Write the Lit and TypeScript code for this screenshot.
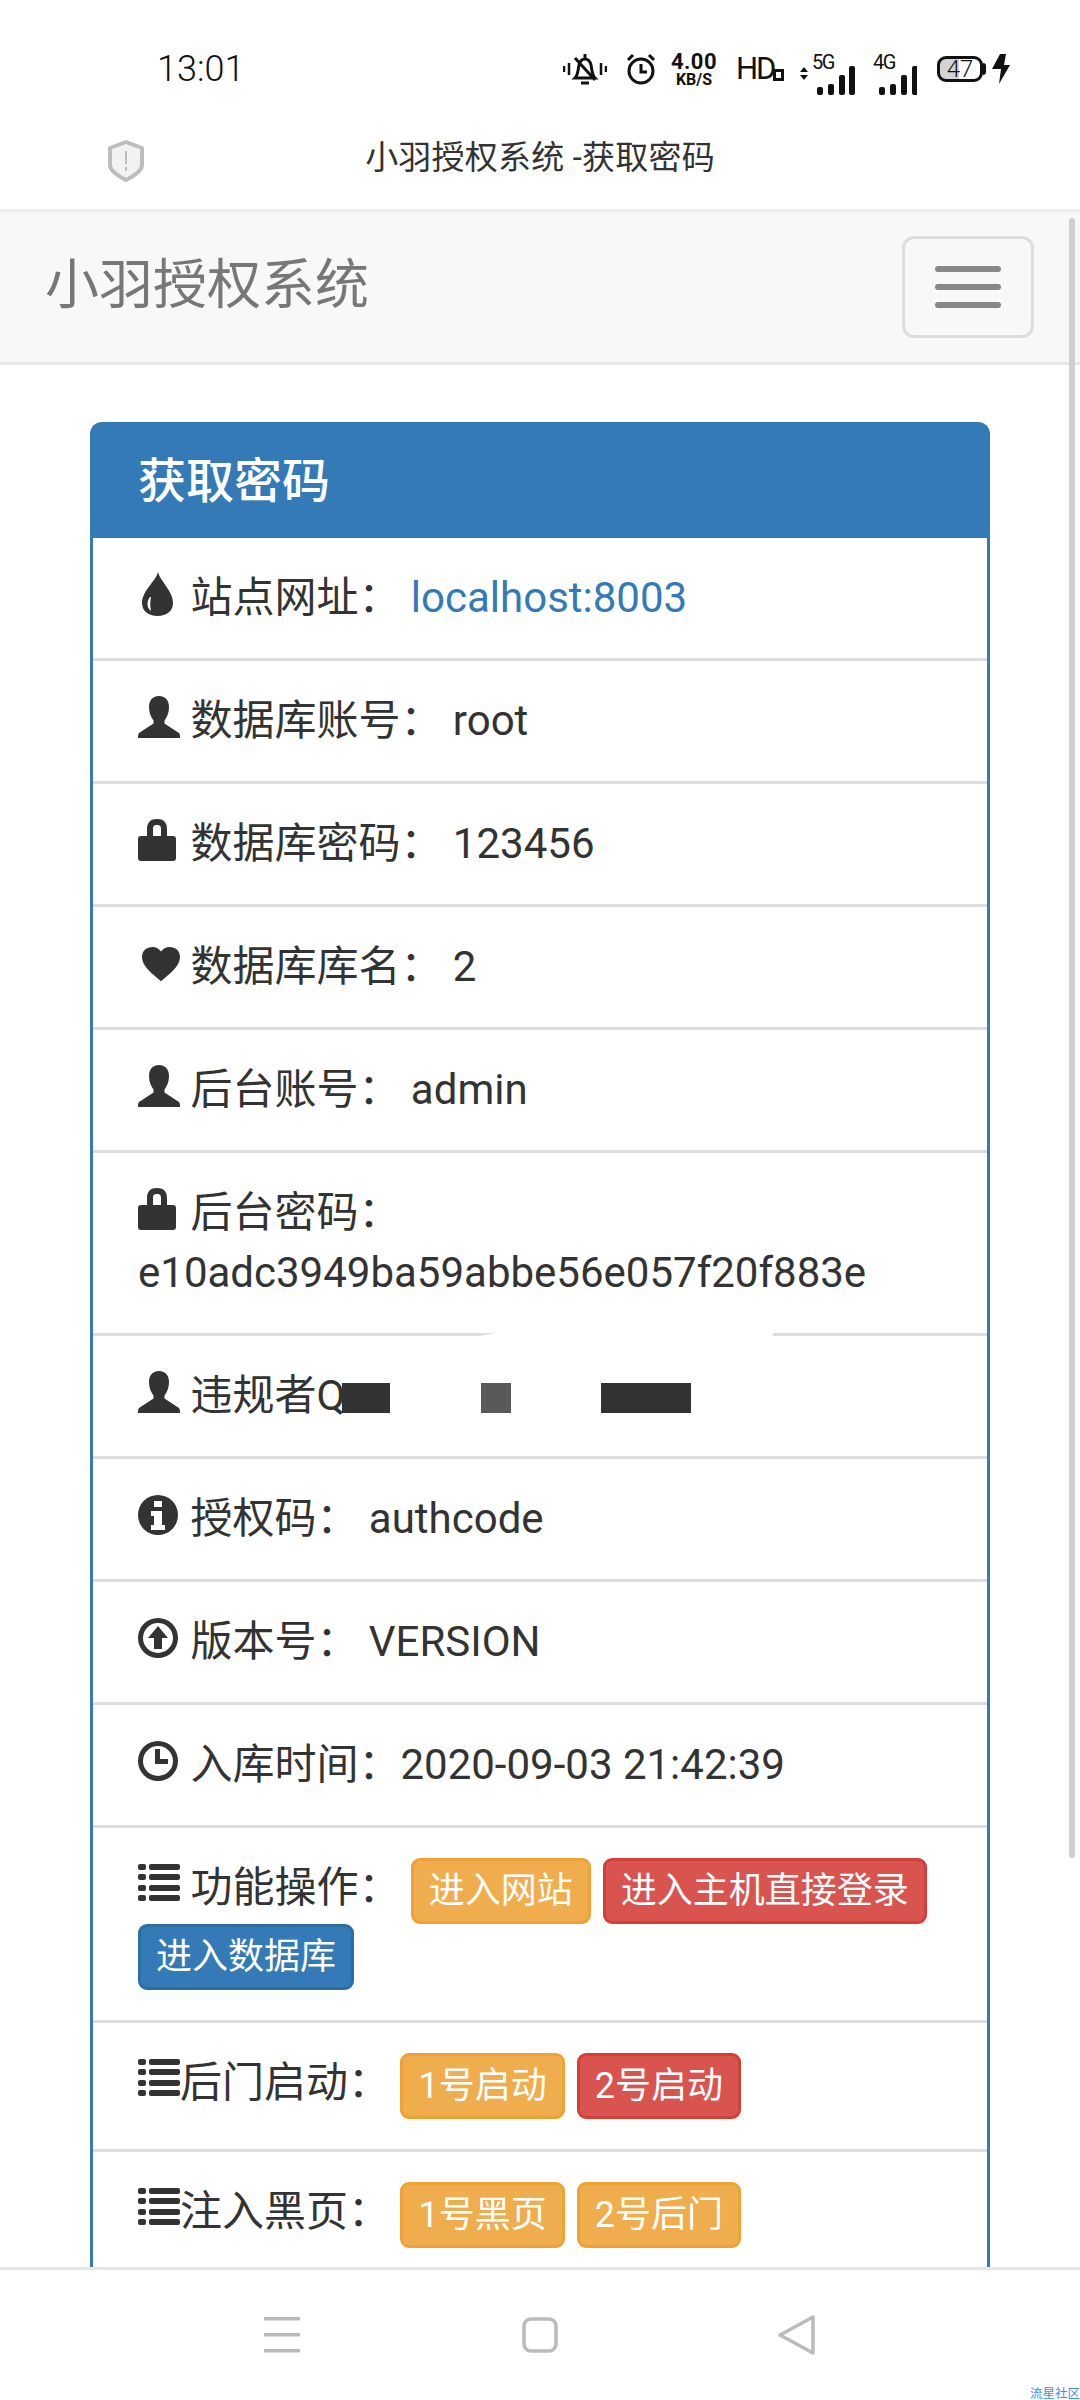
import { LitElement, html, css, svg } from "lit";
import { customElement } from "lit/decorators.js";

const ICONS: Record<string, unknown> = {
  tint: svg`<path d="M20 -1C18 8 4 18 4 30c0 8 6.500 13 15.500 13S35 38 35 30C35 18 22 8 20 -1Z"/><path fill="#fff" d="M12 24c-3 4-4 10 1 14-1-4-1-9 0-14Z"/>`,
  user: svg`<path d="M21 0c-7 0-10 5-10 11 0 6 2 10 4.500 13.500v3L1 37c-1 1-1 3-1 5h42c0-2 0-4-1-5l-14.500-9.500v-3C29 21 31 17 31 11 31 5 28 0 21 0Z"/>`,
  lock: svg`<path fill-rule="evenodd" d="M19 0c-8 0-10 5-10 10v7H3c-2 0-3 1-3 3v19c0 2 1 3 3 3h32c2 0 3-1 3-3V20c0-2-1-3-3-3h-6v-7c0-5-2-10-10-10Zm-4 17v-7c0-3 1-4 4-4s4 1 4 4v7Z"/>`,
  heart: svg`<path transform="translate(4 5) scale(.95 .9)" d="M20 38C10 29 0 21 0 11 0 4 5 0 11 0c4 0 7 2 9 5 2-3 5-5 9-5 6 0 11 4 11 11 0 10-10 18-20 27Z"/>`,
  info: svg`<path fill-rule="evenodd" d="M20 1a20 20 0 1 0 0 40 20 20 0 0 0 0-40Zm-4 6h8v6h-8Zm-3 10h11v14h3v5H13v-5h3v-9h-3Z"/>`,
  up: svg`<path fill-rule="evenodd" d="M20 1a20 20 0 1 0 0 40 20 20 0 0 0 0-40Zm0 5a15 15 0 1 1 0 30 15 15 0 0 1 0-30Zm0 3L10 21h6v11h8V21h6Z"/>`,
  time: svg`<path fill-rule="evenodd" d="M20 1a20 20 0 1 0 0 40 20 20 0 0 0 0-40Zm0 5a15 15 0 1 1 0 30 15 15 0 0 1 0-30Zm-3 3v15h13v-5h-8V9Z"/>`,
  list: svg`<path d="M2 1h4a2 2 0 0 1 2 2v2a2 2 0 0 1-2 2H2a2 2 0 0 1-2-2V3a2 2 0 0 1 2-2Zm11 0h27a2 2 0 0 1 2 2v2a2 2 0 0 1-2 2H13a2 2 0 0 1-2-2V3a2 2 0 0 1 2-2ZM2 11h4a2 2 0 0 1 2 2v2a2 2 0 0 1-2 2H2a2 2 0 0 1-2-2v-2a2 2 0 0 1 2-2Zm11 0h27a2 2 0 0 1 2 2v2a2 2 0 0 1-2 2H13a2 2 0 0 1-2-2v-2a2 2 0 0 1 2-2ZM2 22h4a2 2 0 0 1 2 2v2a2 2 0 0 1-2 2H2a2 2 0 0 1-2-2v-2a2 2 0 0 1 2-2Zm11 0h27a2 2 0 0 1 2 2v2a2 2 0 0 1-2 2H13a2 2 0 0 1-2-2v-2a2 2 0 0 1 2-2ZM2 32h4a2 2 0 0 1 2 2v2a2 2 0 0 1-2 2H2a2 2 0 0 1-2-2v-2a2 2 0 0 1 2-2Zm11 0h27a2 2 0 0 1 2 2v2a2 2 0 0 1-2 2H13a2 2 0 0 1-2-2v-2a2 2 0 0 1 2-2Z"/>`,
};

const glyph = (name: string) =>
  html`<svg class="glyph" viewBox="0 0 42 42" fill="#333">${ICONS[name]}</svg>`;

type Btn = [string, string];

@customElement("app-root")
export class AppRoot extends LitElement {
  static styles = css`
    :host {
      display: flex;
      flex-direction: column;
      position: relative;
      width: 1080px;
      height: 2400px;
      overflow: hidden;
      background: #fff;
      color: #333;
      font-family: Roboto, "Noto Sans CJK SC", sans-serif;
      font-size: 42px;
      line-height: 60px;
    }
    .status {
      height: 104px;
      flex: none;
      display: flex;
      align-items: center;
      padding: 34px 0 0 157px;
      box-sizing: border-box;
      color: #111;
    }
    .time {
      font-size: 36px;
      line-height: 40px;
      width: 406px;
      font-weight: 300;
    }
    .sicons {
      display: flex;
      align-items: center;
      height: 34px;
    }
    .speed {
      display: flex;
      flex-direction: column;
      align-items: center;
      margin: 0 17px 0 13px;
      width: 50px;
    }
    .speed b {
      font-size: 22px;
      line-height: 19px;
      font-weight: 700;
      letter-spacing: 0.4px;
    }
    .speed i {
      font-size: 16px;
      line-height: 15px;
      font-weight: 700;
      font-style: normal;
      margin-top: 1px;
    }
    .hd {
      font-size: 31px;
      line-height: 40px;
      width: 37px;
      letter-spacing: -2px;
    }
    .hdbox {
      width: 11px;
      height: 12px;
      border: 3px solid #111;
      box-sizing: border-box;
      margin: 11px 15px 0 0;
    }
    .sig {
      position: relative;
      height: 32px;
    }
    .sig span {
      position: absolute;
      top: 0;
      font-size: 20px;
      line-height: 18px;
      letter-spacing: -1.5px;
    }
    .batt {
      position: relative;
      width: 46px;
      height: 26px;
      margin-left: 20px;
      border: 3px solid #111;
      border-radius: 9px;
      box-sizing: border-box;
      font-size: 24px;
      font-weight: 300;
      line-height: 20px;
      text-align: center;
      background: linear-gradient(90deg, #d4d4d4 47%, #fff 47%);
    }
    .nub {
      width: 3px;
      height: 12px;
      background: #111;
      border-radius: 0 3px 3px 0;
    }
    .titlebar {
      height: 108px;
      flex: none;
      position: relative;
      display: flex;
      align-items: center;
      justify-content: center;
      font-size: 33px;
      line-height: 44px;
      letter-spacing: 0.2px;
      color: #333;
      padding: 3px 0 0 0;
      box-sizing: border-box;
      border-bottom: 3px solid #eee;
    }
    .shield {
      position: absolute;
      left: 107px;
      top: 36px;
    }
    .navbar {
      flex: none;
      height: 153px;
      box-sizing: border-box;
      background: #f8f8f8;
      border-bottom: 3px solid #e7e7e7;
      display: flex;
      align-items: center;
      justify-content: space-between;
      padding: 0 46px 0 45px;
    }
    .brand {
      font-size: 54px;
      line-height: 60px;
      color: #777;
      margin-top: -2px;
    }
    .toggle {
      width: 132px;
      height: 102px;
      box-sizing: border-box;
      border: 3px solid #ddd;
      border-radius: 12px;
      display: flex;
      flex-direction: column;
      justify-content: center;
      align-items: center;
      gap: 12px;
    }
    .toggle i {
      width: 66px;
      height: 6px;
      background: #888;
      border-radius: 3px;
    }
    main {
      flex: 1;
      min-height: 0;
      overflow: hidden;
      padding: 57px 90px 0;
    }
    .panel {
      border: 3px solid #337ab7;
      border-radius: 12px;
      background: #fff;
    }
    .heading {
      background: #337ab7;
      color: #fff;
      padding: 30px 45px;
      font-size: 48px;
      line-height: 53px;
      font-weight: 500;
    }
    .row {
      position: relative;
      padding: 30px 45px;
      border-bottom: 3px solid #ddd;
    }
    .glyph {
      display: inline-block;
      width: 42px;
      height: 42px;
      overflow: visible;
      vertical-align: -3px;
      margin-top: -10px;
    }
    a {
      color: #337ab7;
    }
    .btn {
      display: inline-block;
      padding: 3px 15px;
      border: 3px solid;
      border-radius: 9px;
      font-size: 36px;
      line-height: 54px;
      color: #fff;
      vertical-align: middle;
      margin-right: 12px;
    }
    .btn-warning {
      background: #f0ad4e;
      border-color: #eea236;
    }
    .btn-danger {
      background: #d9534f;
      border-color: #d43f3a;
    }
    .btn-primary {
      background: #337ab7;
      border-color: #2e6da4;
    }
    .mask {
      display: inline-block;
      height: 30px;
      vertical-align: -3px;
      background: #333;
    }
    .mask-a {
      width: 48px;
      margin-left: -3px;
    }
    .mask-b {
      width: 30px;
      margin-left: 91px;
      background: #595959;
    }
    .mask-c {
      width: 90px;
      margin-left: 90px;
    }
    .smear {
      position: absolute;
      left: 382px;
      top: -3px;
      width: 298px;
      height: 4px;
      background: #fff;
      clip-path: polygon(0 100%, 20px 0, 100% 0, 100% 100%);
    }
    .scroll {
      position: absolute;
      left: 1069px;
      top: 218px;
      width: 6px;
      height: 1640px;
      border-radius: 3px;
      background: #cfcfcf;
    }
    .bottom {
      flex: none;
      height: 133px;
      box-sizing: border-box;
      border-top: 3px solid #e6e6e6;
      background: #fff;
      position: relative;
      z-index: 1;
      display: flex;
      align-items: center;
      padding: 0 0 0 264px;
    }
    .bottom svg {
      display: block;
    }
    .bicon-home {
      margin-left: 222px;
    }
    .bicon-back {
      margin-left: 220px;
    }
    .watermark {
      position: absolute;
      right: 0;
      bottom: 0;
      font-size: 12.500px;
      line-height: 13px;
      color: #3f8fe0;
      white-space: nowrap;
      width: 50px;
      z-index: 2;
    }
  `;

  private renderButtons(btns: Btn[]) {
    return btns.map(
      ([kind, label]) => html`<span class="btn btn-${kind}">${label}</span>`
    );
  }

  private renderStatus() {
    const bars = (x: number[]) => svg`
      <rect x="${x[0]}" y="22" width="6" height="8" rx="2"/>
      <rect x="${x[1]}" y="19" width="6" height="11" rx="2"/>
      <rect x="${x[2]}" y="10" width="6" height="20" rx="2"/>
      <rect x="${x[3]}" y="1" width="6" height="29" rx="2"/>`;
    return html`<div class="status">
      <span class="time">13:01</span>
      <div class="sicons">
        <svg width="44" height="32" viewBox="0 0 44 32" fill="none" stroke="#111" stroke-width="3" style="margin-right:19px">
          <path d="M1 13v6M6 10v12M38 10v12M43 13v6" stroke-width="2.500"/>
          <path d="M12 25c3-3 3-8 4-13 1-4 3-6 6-6s5 2 6 6c1 5 1 10 4 13ZM22 1v4M18 30h8M12 5l20 22"/>
        </svg>
        <svg width="30" height="32" viewBox="0 0 30 32" fill="none" stroke="#111" stroke-width="3">
          <circle cx="15" cy="18" r="12"/>
          <path d="M15 11v8h6M2 7l5-5M28 7l-5-5"/>
        </svg>
        <div class="speed"><b>4.00</b><i>KB/S</i></div>
        <span class="hd">HD</span><span class="hdbox"></span>
        <div class="sig" style="width:56px">
          <svg width="56" height="32" viewBox="0 0 56 32" fill="#111">
            <path d="M1 7l4-5 4 5ZM1 10l4 5 4-5Z"/>${bars([18, 29, 40, 50])}
          </svg>
          <span style="left:13px">5G</span>
        </div>
        <div class="sig" style="width:44px;margin-left:18px">
          <svg width="44" height="32" viewBox="0 0 44 32" fill="#111">${bars([6, 17, 28, 39])}</svg>
          <span style="left:0">4G</span>
        </div>
        <div class="batt">47</div>
        <span class="nub"></span>
        <svg width="18" height="30" viewBox="0 0 18 30" fill="#111" style="margin-left:6px">
          <path d="M8 0h6l-2 11h6L7 30l2-15H0Z"/>
        </svg>
      </div>
    </div>`;
  }

  render() {
    const rows = [
      ["tint", "站点网址：", html`<a>localhost:8003</a>`, " "],
      ["user", "数据库账号：", "root", " "],
      ["lock", "数据库密码：", "123456", " "],
      ["heart", "数据库库名：", "2", " "],
      ["user", "后台账号：", "admin", " "],
      ["lock", "后台密码：", "e10adc3949ba59abbe56e057f20f883e", " "],
    ] as const;
    const rows2 = [
      ["info", "授权码：", "authcode", " "],
      ["up", "版本号：", "VERSION", " "],
      ["time", "入库时间：", "2020-09-03 21:42:39", ""],
    ] as const;
    const row = (r: readonly [string, string, unknown, string]) =>
      html`<div class="row">${glyph(r[0])} ${r[1]}${r[3]}${r[2]}</div>`;

    return html`
      ${this.renderStatus()}
      <div class="titlebar">
        <svg class="shield" width="38" height="42" viewBox="0 0 38 42" fill="none">
          <path d="M19 2l16 6v17c0 6-8 11-16 15C11 36 3 31 3 25V8Z" fill="#f2f2f2" stroke="#bdbdbd" stroke-width="4" stroke-linejoin="round"/>
          <path d="M19 11v13M19 27v4" stroke="#bdbdbd" stroke-width="2"/>
        </svg>
        <span>小羽授权系统 -获取密码</span>
      </div>
      <div class="navbar">
        <span class="brand">小羽授权系统</span>
        <div class="toggle"><i></i><i></i><i></i></div>
      </div>
      <main>
        <div class="panel">
          <div class="heading">获取密码</div>
          ${rows.map(row)}
          <div class="row">
            <div class="smear"></div>
            ${glyph("user")} 违规者Q<span class="mask mask-a"></span><span class="mask mask-b"></span><span class="mask mask-c"></span>
          </div>
          ${rows2.map(row)}
          <div class="row">
            ${glyph("list")} 功能操作： ${this.renderButtons([
              ["warning", "进入网站"],
              ["danger", "进入主机直接登录"],
              ["primary", "进入数据库"],
            ])}
          </div>
          <div class="row">
            ${glyph("list")}后门启动： ${this.renderButtons([
              ["warning", "1号启动"],
              ["danger", "2号启动"],
            ])}
          </div>
          <div class="row">
            ${glyph("list")}注入黑页： ${this.renderButtons([
              ["warning", "1号黑页"],
              ["warning", "2号后门"],
            ])}
          </div>
        </div>
      </main>
      <div class="bottom">
        <svg width="36" height="36" viewBox="0 0 36 36" fill="#bbb">
          <rect y="0" width="36" height="3.500"/><rect y="16" width="36" height="3.500"/><rect y="32" width="36" height="3.500"/>
        </svg>
        <svg class="bicon-home" width="36" height="36" viewBox="0 0 36 36" fill="none" stroke="#bbb" stroke-width="3.500">
          <rect x="2" y="2" width="32" height="32" rx="7"/>
        </svg>
        <svg class="bicon-back" width="38" height="40" viewBox="0 0 38 40" fill="none" stroke="#bbb" stroke-width="3.500" stroke-linejoin="round">
          <path d="M35 2v36L2 20Z"/>
        </svg>
      </div>
      <div class="watermark">流星社区</div>
      <div class="scroll"></div>
    `;
  }
}
